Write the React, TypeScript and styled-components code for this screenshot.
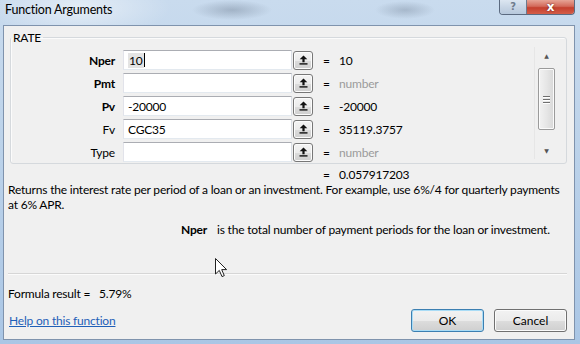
import React from "react";
import styled, { createGlobalStyle } from "styled-components";

const GlobalStyle = createGlobalStyle`
  html, body {
    margin: 0;
    padding: 0;
  }
  body {
    width: 580px;
    height: 344px;
    overflow: hidden;
    font-family: Lato, "Noto Sans", sans-serif;
    font-size: 12px;
    letter-spacing: -0.2px;
    color: #000;
  }
`;

interface Arg {
  name: string;
  value: string;
  result: string;
  required: boolean;
  hint?: boolean;
}

const args: Arg[] = [
  { name: "Nper", value: "10", result: "10", required: true },
  { name: "Pmt", value: "", result: "number", required: true, hint: true },
  { name: "Pv", value: "-20000", result: "-20000", required: true },
  { name: "Fv", value: "CGC35", result: "35119.3757", required: false },
  { name: "Type", value: "", result: "number", required: false, hint: true },
];

const CollapseIcon = () => (
  <svg width="9" height="10" viewBox="0 0 9 10">
    <path d="M4.5 0.5 L8.3 4.3 L5.6 4.3 L5.6 7.2 L3.4 7.2 L3.4 4.3 L0.7 4.3 Z" fill="#111" />
    <rect x="0.5" y="8.2" width="8" height="1.4" fill="#111" />
  </svg>
);

const Cursor = () => (
  <svg width="13" height="20" viewBox="0 0 13 20">
    <path
      d="M0.5 0.5 L0.5 16 L4.3 12.4 L7 18.6 L9.3 17.6 L6.7 11.6 L11.6 11.6 Z"
      fill="#fff"
      stroke="#222"
      strokeWidth="1"
      strokeLinejoin="round"
    />
  </svg>
);

export default function App() {
  return (
    <>
      <GlobalStyle />
      <Window>
        <TitleBar>
          <Title>Function Arguments</Title>
          <CaptionButtons>
            <HelpButton>?</HelpButton>
            <CloseButton>x</CloseButton>
          </CaptionButtons>
        </TitleBar>
        <Client>
          <GroupBox>
            <Legend>RATE</Legend>
            <GroupBody>
              <ArgList>
                {args.map((arg, i) => (
                  <ArgRow key={arg.name}>
                    <ArgLabel required={arg.required}>{arg.name}</ArgLabel>
                    <ArgInput>
                      {i === 0 ? (
                        <>
                          <Selected>{arg.value}</Selected>
                          <Caret />
                        </>
                      ) : (
                        arg.value
                      )}
                    </ArgInput>
                    <RefButton>
                      <CollapseIcon />
                    </RefButton>
                    <Equals>=</Equals>
                    <ArgResult hint={arg.hint}>{arg.result}</ArgResult>
                  </ArgRow>
                ))}
              </ArgList>
              <ScrollBar>
                <ScrollArrow>▲</ScrollArrow>
                <ScrollThumb>
                  <Grip />
                  <Grip />
                  <Grip />
                </ScrollThumb>
                <ScrollTrack />
                <ScrollArrow>▼</ScrollArrow>
              </ScrollBar>
            </GroupBody>
          </GroupBox>
          <ResultLine>
            <Equals>=</Equals>
            <span>0.057917203</span>
          </ResultLine>
          <Description>
            Returns the interest rate per period of a loan or an investment. For example, use 6%/4
            for quarterly payments at 6% APR.
          </Description>
          <ArgHelp>
            <ArgHelpName>Nper</ArgHelpName>
            <span>is the total number of payment periods for the loan or investment.</span>
          </ArgHelp>
          <Separator />
          <FormulaResult>
            Formula result = <FormulaValue>5.79%</FormulaValue>
          </FormulaResult>
          <Footer>
            <HelpLink href="#">Help on this function</HelpLink>
            <Buttons>
              <DialogButton isDefault>OK</DialogButton>
              <DialogButton>Cancel</DialogButton>
            </Buttons>
          </Footer>
          <MousePointer>
            <Cursor />
          </MousePointer>
        </Client>
      </Window>
    </>
  );
}

const Window = styled.div`
  width: 580px;
  height: 344px;
  box-sizing: border-box;
  display: flex;
  flex-direction: column;
  padding: 0 5px 4px 3px;
  background:
    radial-gradient(ellipse 40px 10px at 232px 10px, rgba(90, 105, 125, 0.35), transparent),
    radial-gradient(ellipse 30px 9px at 405px 10px, rgba(90, 105, 125, 0.3), transparent),
    radial-gradient(ellipse 90px 30px at 80px 8px, rgba(255, 255, 255, 0.5), transparent),
    linear-gradient(180deg, #c9dbee 0%, #bdd3ea 40%, #aac6e5 100%);
`;

const TitleBar = styled.div`
  height: 25px;
  display: flex;
  justify-content: space-between;
  align-items: flex-start;
`;

const Title = styled.div`
  padding: 2px 0 0 2px;
  font-size: 12.5px;
  line-height: 15px;
  color: #000;
`;

const CaptionButtons = styled.div`
  display: flex;
  height: 14px;
  border: 1px solid #5b6a80;
  border-top: none;
  border-radius: 0 0 4px 4px;
  overflow: hidden;
`;

const HelpButton = styled.div`
  width: 26px;
  display: flex;
  align-items: center;
  justify-content: center;
  background: linear-gradient(180deg, #dce6f1 0%, #c6d4e4 55%, #b7c8dc 100%);
  border-right: 1px solid #6c7a8e;
  color: #6f7c8d;
  font-family: "DejaVu Sans", sans-serif;
  font-size: 10px;
  font-weight: bold;
  line-height: 12px;
`;

const CloseButton = styled.div`
  width: 47px;
  display: flex;
  align-items: center;
  justify-content: center;
  background: linear-gradient(180deg, #e6a496 0%, #d36a5b 45%, #c4402f 55%, #d45d48 100%);
  color: #fff;
  font-family: "DejaVu Sans", sans-serif;
  font-size: 12px;
  font-weight: bold;
  line-height: 12px;
  text-shadow: 0 0 2px #5a1a10;
`;

const Client = styled.div`
  position: relative;
  flex: 1;
  display: flex;
  flex-direction: column;
  background: #f0f0f0;
  border: 1px solid #7f93ad;
`;

const GroupBox = styled.fieldset`
  margin: 4px 7px 0 6px;
  padding: 0;
  border: 1px solid #d5d9dd;
  border-radius: 3px;
  box-shadow: inset 1px 1px 0 #fbfbfb;
  min-width: 0;
`;

const Legend = styled.legend`
  padding: 0 2px;
  margin: 0;
  line-height: 15px;
  color: #000;
`;

const GroupBody = styled.div`
  display: flex;
  padding: 5px 0 1px 0;
`;

const ArgList = styled.div`
  flex: 1;
  display: flex;
  flex-direction: column;
  gap: 3px;
`;

const ArgRow = styled.div`
  display: flex;
  align-items: center;
  height: 20px;
`;

const ArgLabel = styled.div<{ required: boolean }>`
  width: 104px;
  margin-right: 8px;
  text-align: right;
  font-weight: ${(p) => (p.required ? "bold" : "normal")};
`;

const ArgInput = styled.div`
  width: 169px;
  height: 20px;
  box-sizing: border-box;
  display: flex;
  align-items: center;
  padding: 0 4px;
  background: #fff;
  border: 1px solid #abadb3;
  border-color: #abadb3 #dbdfe6 #e3e9ef #e2e3ea;
`;

const Selected = styled.span`
  background: #e4e4e4;
  padding: 0 1px;
`;

const Caret = styled.span`
  display: inline-block;
  width: 1px;
  height: 14px;
  background: #000;
`;

const RefButton = styled.div`
  width: 20px;
  height: 19px;
  box-sizing: border-box;
  margin-left: 1px;
  display: flex;
  align-items: center;
  justify-content: center;
  border: 1px solid #777;
  border-radius: 3px;
  background: linear-gradient(180deg, #f4f4f4 0%, #ebebeb 50%, #dcdcdc 51%, #cfcfcf 100%);
  box-shadow: inset 0 0 0 1px #fcfcfc;
`;

const Equals = styled.span`
  width: 16px;
  margin-left: 10px;
`;

const ArgResult = styled.span<{ hint?: boolean }>`
  color: ${(p) => (p.hint ? "#9b9b9b" : "#000")};
`;

const ScrollBar = styled.div`
  width: 19px;
  margin: -3px 8px 3px 0;
  padding: 0 2px;
  display: flex;
  flex-direction: column;
  align-items: center;
  border-left: 1px solid #e6e6e6;
`;

const ScrollArrow = styled.div`
  height: 17px;
  display: flex;
  align-items: center;
  justify-content: center;
  font-size: 6px;
  color: #555;
  font-family: "DejaVu Sans", sans-serif;
`;

const ScrollThumb = styled.div`
  margin-top: 4px;
  width: 17px;
  height: 62px;
  box-sizing: border-box;
  display: flex;
  flex-direction: column;
  align-items: center;
  justify-content: center;
  gap: 2px;
  border: 1px solid #9b9b9b;
  border-radius: 2px;
  background: linear-gradient(90deg, #f2f2f2 0%, #e6e6e6 50%, #d8d8d8 100%);
  box-shadow: inset 0 0 0 1px #fbfbfb;
`;

const Grip = styled.div`
  width: 7px;
  height: 1px;
  background: #6f6f6f;
  box-shadow: 0 1px 0 #fff;
`;

const ScrollTrack = styled.div`
  flex: 1;
`;

const ResultLine = styled.div`
  display: flex;
  margin-top: 3px;
  padding-left: 309px;
  line-height: 15px;
`;

const Description = styled.div`
  padding: 0 6px 0 4px;
  line-height: 15px;
`;

const ArgHelp = styled.div`
  display: flex;
  gap: 10px;
  margin-top: 10px;
  padding-left: 177px;
  line-height: 15px;
`;

const ArgHelpName = styled.span`
  font-weight: bold;
`;

const Separator = styled.div`
  margin: auto 7px 0 4px;
  height: 1px;
  background: #d6d6d6;
  border-bottom: 1px solid #fbfbfb;
`;

const FormulaResult = styled.div`
  margin-top: 11px;
  padding-left: 4px;
  line-height: 15px;
  white-space: pre;
`;

const FormulaValue = styled.span`
  margin-left: 6px;
`;

const Footer = styled.div`
  display: flex;
  justify-content: space-between;
  align-items: center;
  margin: 8px 7px 7px 5px;
`;

const HelpLink = styled.a`
  color: #1f5fb8;
  text-decoration: underline;
`;

const Buttons = styled.div`
  display: flex;
  gap: 10px;
`;

const DialogButton = styled.button<{ isDefault?: boolean }>`
  width: 73px;
  height: 23px;
  padding: 0;
  font-family: inherit;
  font-size: 12px;
  color: #000;
  border: 1px solid ${(p) => (p.isDefault ? "#3c7fb1" : "#707070")};
  border-radius: 3px;
  background: linear-gradient(180deg, #f2f2f2 0%, #ebebeb 50%, #dddddd 51%, #cfcfcf 100%);
  box-shadow: inset 0 0 0 1px ${(p) => (p.isDefault ? "#a9dcf6" : "#fbfbfb")};
`;

const MousePointer = styled.div`
  position: absolute;
  left: 211px;
  top: 232px;
  pointer-events: none;
`;
